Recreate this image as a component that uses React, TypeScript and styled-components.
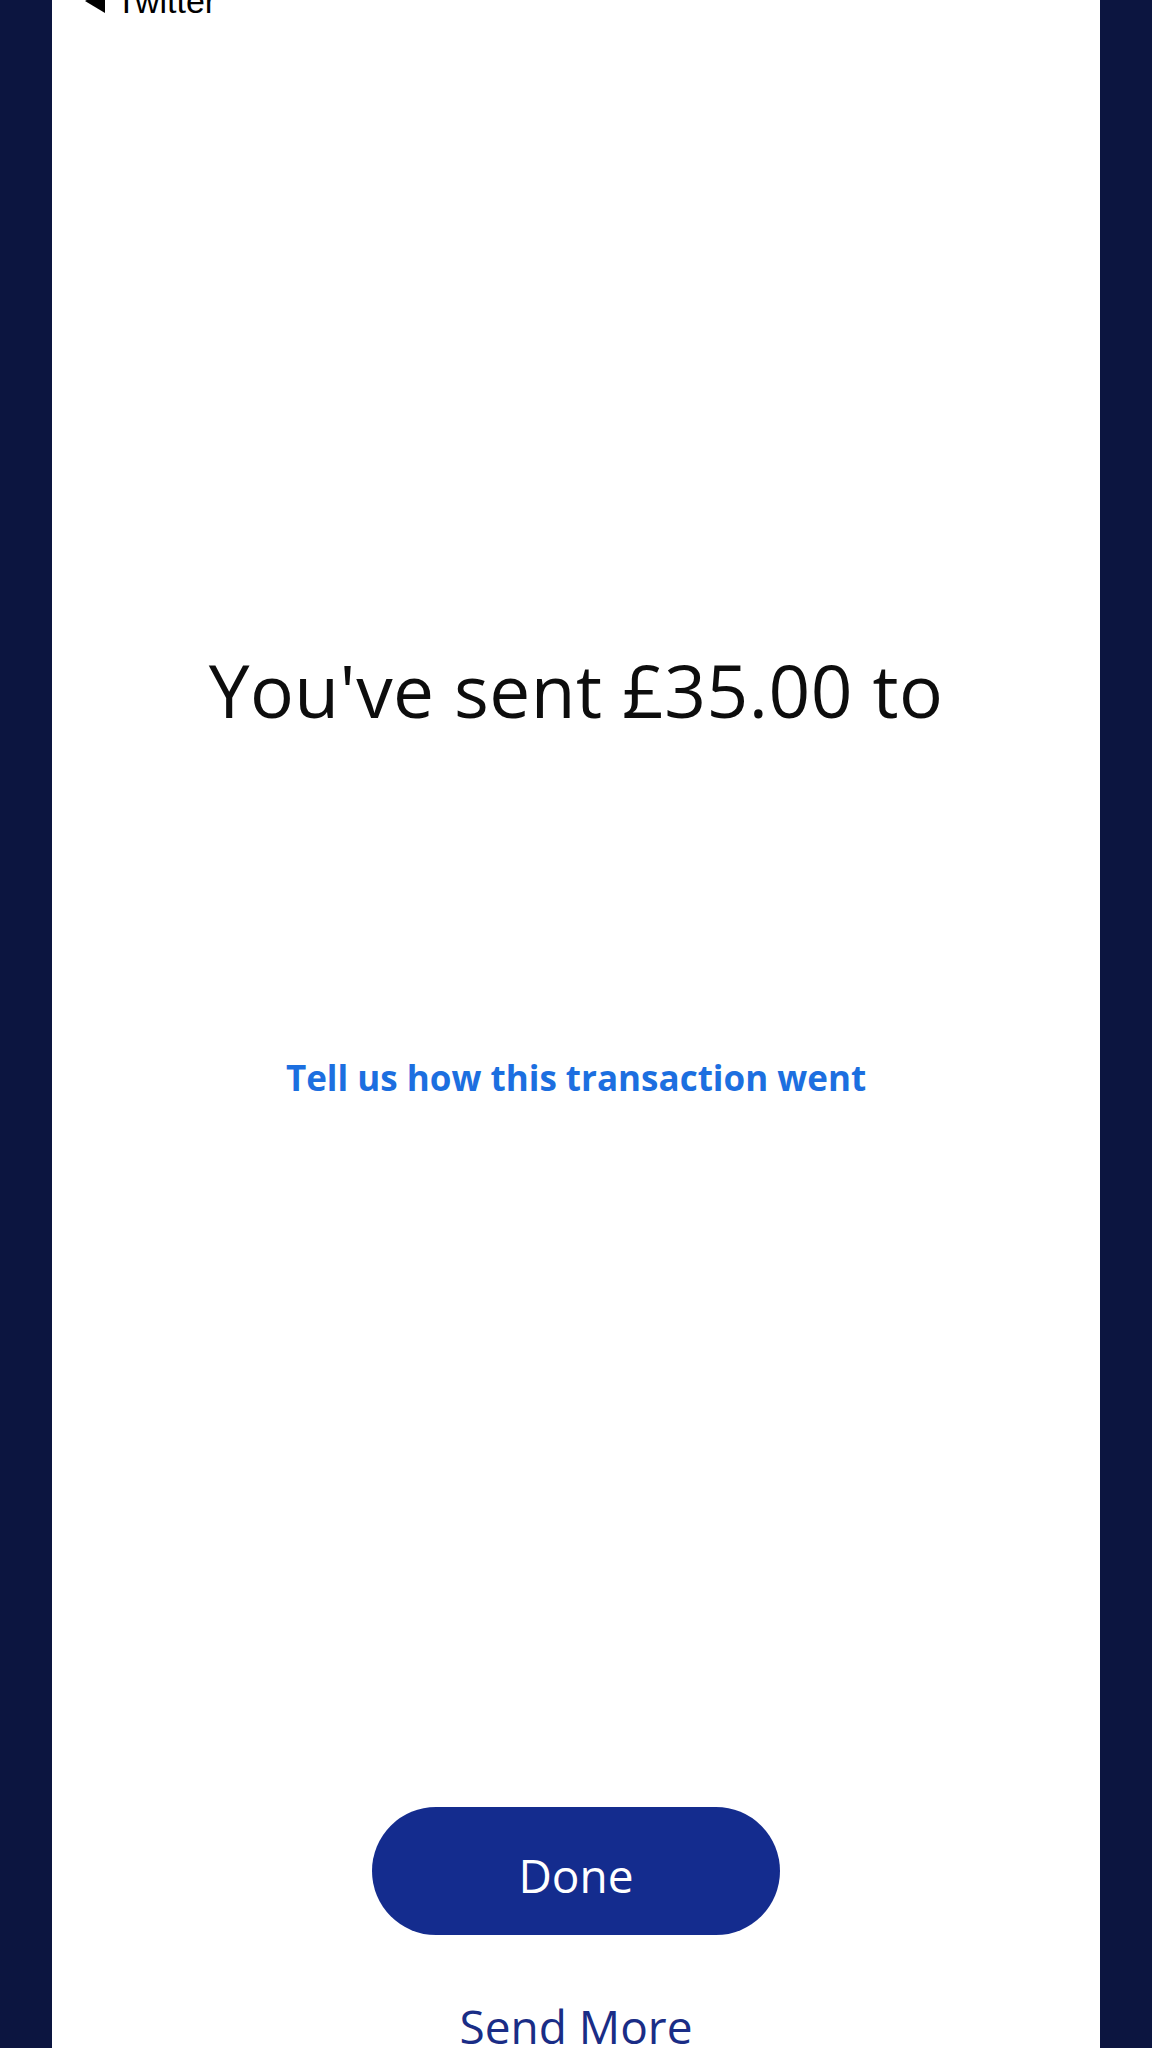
import React from "react";
import styled, { createGlobalStyle } from "styled-components";

const GlobalStyle = createGlobalStyle`
  html, body {
    margin: 0;
    padding: 0;
    background: #0c1540;
  }
  body {
    font-family: "Open Sans", "Noto Sans", sans-serif;
  }
  *, *::before, *::after {
    box-sizing: border-box;
  }
`;

const Page = styled.div`
  width: 1152px;
  height: 2048px;
  background: #0c1540;
  display: flex;
  justify-content: flex-start;
`;

const Panel = styled.main`
  margin-left: 52px;
  width: 1048px;
  height: 2048px;
  background: #ffffff;
  display: flex;
  flex-direction: column;
  align-items: center;
  overflow: hidden;
`;

const BackBar = styled.div`
  align-self: stretch;
  margin-top: -16px;
  padding-left: 33px;
  height: 34px;
  display: flex;
  align-items: center;
  gap: 11px;
  font-family: "Liberation Sans", Arial, sans-serif;
  font-size: 34px;
  line-height: 34px;
  color: #000;
`;

const BackLabel = styled.span`
  display: block;
`;

const Heading = styled.h1`
  margin: 632px 0 0;
  font-family: "Open Sans", sans-serif;
  font-weight: 500;
  font-size: 73px;
  line-height: 80px;
  letter-spacing: 0.5px;
  color: #0d0d0d;
  text-align: center;
`;

const FeedbackLink = styled.a`
  margin-top: 328px;
  font-family: "Open Sans", sans-serif;
  font-weight: 700;
  font-size: 35px;
  line-height: 40px;
  color: #1c6fe0;
  text-decoration: none;
  cursor: pointer;
`;

const DoneButton = styled.button`
  margin-top: 709px;
  flex: 0 0 auto;
  width: 408px;
  height: 128px;
  padding: 8px 0 0;
  border: none;
  border-radius: 64px;
  background: #142c8e;
  color: #ffffff;
  font-family: "Open Sans", sans-serif;
  font-weight: 400;
  font-size: 46px;
  line-height: 46px;
  display: flex;
  align-items: center;
  justify-content: center;
  cursor: pointer;
`;

const SecondaryAction = styled.button`
  margin-top: 63px;
  flex: 0 0 auto;
  border: none;
  background: transparent;
  padding: 0;
  color: #1a2d86;
  font-family: "Open Sans", sans-serif;
  font-weight: 400;
  font-size: 46px;
  line-height: 56px;
  cursor: pointer;
`;

export default function App() {
  return (
    <>
      <GlobalStyle />
      <Page>
        <Panel>
          <BackBar>
            <svg width="20" height="24" viewBox="0 0 20 24" aria-hidden="true">
              <polygon points="0,12 20,0 20,24" fill="#000" />
            </svg>
            <BackLabel>Twitter</BackLabel>
          </BackBar>
          <Heading>You've sent £35.00 to</Heading>
          <FeedbackLink>Tell us how this transaction went</FeedbackLink>
          <DoneButton>Done</DoneButton>
          <SecondaryAction>Send More</SecondaryAction>
        </Panel>
      </Page>
    </>
  );
}
